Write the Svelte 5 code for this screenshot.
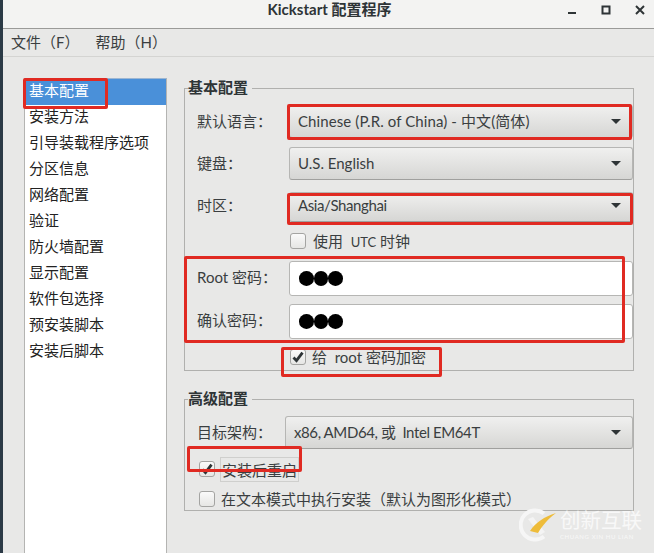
<script>
  const pages = ["基本配置", "安装方法", "引导装载程序选项", "分区信息", "网络配置", "验证", "防火墙配置", "显示配置", "软件包选择", "预安装脚本", "安装后脚本"];
  const marks = [
    { x: 23, y: 78, w: 85, h: 31 },
    { x: 287, y: 104, w: 345, h: 36 },
    { x: 287, y: 193, w: 346, h: 32 },
    { x: 184, y: 256, w: 441, h: 87 },
    { x: 281, y: 347, w: 161, h: 30 },
    { x: 187, y: 446, w: 115, h: 26 }
  ];
</script>

{#snippet arrow()}
  <svg class="arrow" width="10" height="5" viewBox="0 0 10 5"><path d="M0 0h10L5 5z" fill="#2e3436" /></svg>
{/snippet}

{#snippet check(on)}
  <span class="box">
    {#if on}
      <svg width="14" height="14" viewBox="0 0 14 14"><path d="M2.5 7.5l3 3.2 6-8" fill="none" stroke="#2e3436" stroke-width="2.8" /></svg>
    {/if}
  </span>
{/snippet}

<div class="win">
  <header class="title">
    <span class="title-text">Kickstart 配置程序</span>
    <div class="wm">
      <svg width="10" height="10" viewBox="0 0 10 10"><path d="M1 8h8" stroke="#2e3436" stroke-width="2" /></svg>
      <svg width="10" height="10" viewBox="0 0 10 10"><path d="M1.5 1.5h7v7h-7z" fill="none" stroke="#2e3436" stroke-width="2" /></svg>
      <svg width="10" height="10" viewBox="0 0 10 10"><path d="M1 1l8 8M9 1l-8 8" stroke="#2e3436" stroke-width="2" /></svg>
    </div>
  </header>
  <nav class="menu">
    <span>文件（F）</span>
    <span>帮助（H）</span>
  </nav>
  <main class="body">
    <ul class="pages">
      {#each pages as p, i}
        <li class:sel={i === 0}>{p}</li>
      {/each}
    </ul>
    <div class="panes">
      <section class="group basic">
        <h3>基本配置</h3>
        <div class="row">
          <span class="lab">默认语言：</span>
          <div class="combo wide">Chinese (P.R. of China) - 中文(简体){@render arrow()}</div>
        </div>
        <div class="row">
          <span class="lab">键盘：</span>
          <div class="combo">U.S. English{@render arrow()}</div>
        </div>
        <div class="row">
          <span class="lab">时区：</span>
          <div class="combo tight tz">Asia/Shanghai{@render arrow()}</div>
        </div>
        <label class="chk indent utc">{@render check(false)}<span>使用 &nbsp;<span class="small">UTC</span> 时钟</span></label>
        <div class="row pw">
          <span class="lab">Root 密码：</span>
          <div class="entry"><i></i><i></i><i></i></div>
        </div>
        <div class="row pw">
          <span class="lab">确认密码：</span>
          <div class="entry"><i></i><i></i><i></i></div>
        </div>
        <label class="chk indent enc">{@render check(true)}给 &nbsp;root 密码加密</label>
      </section>
      <section class="group adv">
        <h3>高级配置</h3>
        <div class="row arch">
          <span class="lab">目标架构：</span>
          <div class="combo tight">x86, AMD64, 或 &nbsp;Intel EM64T{@render arrow()}</div>
        </div>
        <label class="chk reboot">{@render check(true)}<span class="focus">安装后重启</span></label>
        <label class="chk text">{@render check(false)}在文本模式中执行安装（默认为图形化模式）</label>
      </section>
    </div>
  </main>

  {#each marks as m}
    <div class="mark" style="left:{m.x}px;top:{m.y}px;width:{m.w}px;height:{m.h}px"></div>
  {/each}

  <div class="stamp">
    <svg width="38" height="36" viewBox="0 0 38 36">
      <path d="M25 6.5A14.5 14.5 0 1 0 25 29.5" fill="none" stroke="#f6f6f6" stroke-width="4" />
      <path d="M9 12l5-2 12 15-5 3z" fill="#f4f4f4" />
      <path d="M11 24C17 15 25 10 37 6 29 12 24 18 19 26z" fill="#eebc3a" />
    </svg>
    <div class="stamp-text">
      <b>创新互联</b>
      <small>CHUANG XIN HU LIAN</small>
    </div>
  </div>
</div>

<style>
  :global(body) {
    margin: 0;
    background: #e8e8e7;
  }
  .win {
    position: relative;
    width: 654px;
    height: 553px;
    overflow: hidden;
    background: #e8e8e7;
    box-sizing: border-box;
    border-left: 3px solid #2b3a46;
    font-family: Lato, "Noto Sans CJK SC", sans-serif;
    font-size: 15px;
    color: #3a3e40;
  }
  .title {
    height: 28px;
    background: #f3f3f2;
    border-bottom: 1px solid #9a9a98;
    display: flex;
    align-items: center;
    justify-content: center;
    position: relative;
  }
  .title-text {
    font-weight: 700;
    color: #2e3436;
    margin-left: 2px;
    margin-top: -11px;
  }
  .wm {
    position: absolute;
    right: 9px;
    top: 5px;
    display: flex;
    gap: 24px;
  }
  .menu {
    height: 28px;
    display: flex;
    gap: 16px;
    align-items: center;
    padding: 0 0 2px 8px;
    box-sizing: border-box;
    border-bottom: 1px solid #d4d4d2;
    color: #3a3e40;
  }
  .body {
    display: flex;
    padding: 21px 0 0 21px;
    gap: 17px;
  }
  .pages {
    list-style: none;
    margin: 0;
    padding: 0;
    width: 143px;
    height: 520px;
    flex: none;
    background: #fff;
    border: 1px solid #b4b4b2;
    border-top-color: #9db6d2;
    box-sizing: border-box;
    color: #222;
  }
  .pages li {
    height: 26px;
    line-height: 22px;
    padding-left: 4px;
  }
  .pages li.sel {
    background: #4a90d9;
    color: #fff;
  }
  .panes {
    width: 450px;
    padding-top: 10px;
  }
  .group {
    position: relative;
    border: 1px solid #b0b0ae;
    box-sizing: border-box;
    padding: 0 0 0 12px;
  }
  .group h3 {
    position: absolute;
    left: 3px;
    top: -12px;
    margin: 0;
    padding-right: 4px;
    background: #e8e8e7;
    font-size: 15px;
    line-height: 20px;
    font-weight: 700;
    color: #2e3436;
  }
  .basic {
    height: 283px;
    padding-top: 16px;
  }
  .adv {
    height: 112px;
    margin-top: 28px;
    padding-top: 16px;
  }
  .row {
    display: flex;
    align-items: center;
    margin-bottom: 9px;
  }
  .lab {
    width: 92px;
    flex: none;
    color: #3a3e40;
    padding-bottom: 2px;
  }
  .combo {
    flex: 1;
    height: 33px;
    box-sizing: border-box;
    border: 1px solid #b6b6b4;
    border-bottom-color: #a0a09e;
    border-radius: 3px;
    background: linear-gradient(#f0f0ef, #d6d6d4);
    display: flex;
    align-items: center;
    justify-content: space-between;
    padding: 0 11px 2px 8px;
    color: #3a3e40;
  }
  .tz {
    height: 30px;
    margin-top: 3px;
    padding-bottom: 5px;
  }
  .wide {
    letter-spacing: 0.1px;
  }
  .tight {
    letter-spacing: -0.4px;
  }
  .arrow {
    flex: none;
    margin-top: 2px;
  }
  .pw {
    margin-bottom: 8px;
  }
  .pw .lab {
    padding-bottom: 4px;
  }
  .entry {
    flex: 1;
    height: 35px;
    box-sizing: border-box;
    background: #fff;
    border: 1px solid #b6b6b4;
    border-radius: 3px;
    display: flex;
    align-items: center;
    padding-left: 9px;
  }
  .entry i {
    width: 14.7px;
    height: 14.7px;
    border-radius: 50%;
    background: #000;
  }
  .chk {
    display: flex;
    align-items: center;
    gap: 7px;
    height: 20px;
    line-height: 18px;
  }
  .small {
    font-size: 13px;
  }
  .indent {
    margin-left: 93px;
  }
  .box {
    width: 14px;
    height: 14px;
    flex: none;
    border: 1px solid #a4a4a2;
    border-radius: 3px;
    background: linear-gradient(#fafafa, #e6e6e4);
    display: inline-flex;
  }
  .utc {
    margin-top: 8px;
    margin-bottom: 10px;
  }
  .enc {
    margin-top: 8px;
    gap: 6px;
    line-height: 16px;
  }
  .arch {
    margin-bottom: 8px;
  }
  .arch .lab {
    width: 88px;
  }
  .reboot {
    margin-left: 2px;
    height: 24px;
  }
  .reboot .focus {
    border: 1px solid #cfcfcd;
    padding: 1px 1px 0;
    margin-left: -2px;
    line-height: 22px;
  }
  .text {
    margin-left: 2px;
    margin-top: 8px;
    gap: 6px;
    line-height: 16px;
  }
  .mark {
    position: absolute;
    box-sizing: border-box;
    border: 3px solid #e02a22;
    border-radius: 2px;
    margin-left: -3px;
  }
  .stamp {
    position: absolute;
    left: 516px;
    top: 507px;
    display: flex;
    align-items: center;
    gap: 3px;
  }
  .stamp-text {
    display: flex;
    flex-direction: column;
    color: #f8f8f8;
    line-height: 1;
  }
  .stamp-text b {
    font-weight: 400;
    font-size: 20.5px;
  }
  .stamp-text small {
    font-size: 6px;
    letter-spacing: 0.6px;
    margin-top: 3px;
  }
</style>
